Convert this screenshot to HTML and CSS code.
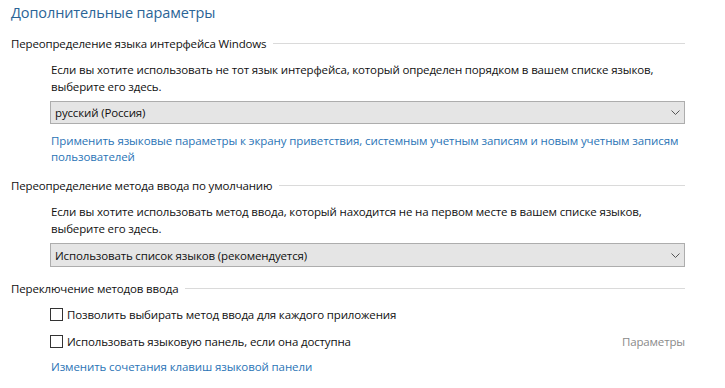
FILE: index.html
```html
<!DOCTYPE html>
<html lang="ru">
<head>
<meta charset="utf-8">
<link rel="stylesheet" href="styles.css">
</head>
<body>
<div class="page">
  <h1 class="title">Дополнительные параметры</h1>

  <div class="section-head"><span>Переопределение языка интерфейса Windows</span><i class="rule"></i></div>
  <div class="indent">
    <p class="para">Если вы хотите использовать не тот язык интерфейса, который определен порядком в вашем списке языков, выберите его здесь.</p>
    <div class="select select-1"><span>русский (Россия)</span><svg class="chev" width="9" height="5" viewBox="0 0 9 5"><path d="M0.5 0.5 L4.5 4.5 L8.5 0.5" fill="none" stroke="#555" stroke-width="1"/></svg></div>
    <a class="link link-1">Применить языковые параметры к экрану приветствия, системным учетным записям и новым учетным записям пользователей</a>
  </div>

  <div class="section-head sh-2"><span>Переопределение метода ввода по умолчанию</span><i class="rule"></i></div>
  <div class="indent">
    <p class="para para-2">Если вы хотите использовать метод ввода, который находится не на первом месте в вашем списке языков, выберите его здесь.</p>
    <div class="select select-2"><span>Использовать список языков (рекомендуется)</span><svg class="chev" width="9" height="5" viewBox="0 0 9 5"><path d="M0.5 0.5 L4.5 4.5 L8.5 0.5" fill="none" stroke="#555" stroke-width="1"/></svg></div>
  </div>

  <div class="section-head sh-3"><span>Переключение методов ввода</span><i class="rule"></i></div>
  <div class="indent">
    <div class="check-row cr-1"><span class="box"></span><span>Позволить выбирать метод ввода для каждого приложения</span></div>
    <div class="check-row cr-2"><span class="box"></span><span>Использовать языковую панель, если она доступна</span><span class="muted">Параметры</span></div>
    <a class="link link-2">Изменить сочетания клавиш языковой панели</a>
  </div>
</div>
</body>
</html>
```

FILE: styles.css
```css
html, body {
  margin: 0;
  padding: 0;
  background: #ffffff;
}
.page {
  width: 725px;
  box-sizing: border-box;
  padding: 3px 40px 0 11px;
  font-family: "Open Sans", "Noto Sans", sans-serif;
  font-size: 11.5px;
  letter-spacing: -0.15px;
  color: #111;
}
.title {
  margin: 0;
  font-size: 14.5px;
  font-weight: normal;
  letter-spacing: -0.1px;
  line-height: 20px;
  color: #2b6496;
}
.section-head {
  display: flex;
  align-items: center;
  gap: 7px;
  margin-top: 13px;
  line-height: 16px;
  height: 16px;
  white-space: nowrap;
}
.section-head .rule {
  flex: 1;
  height: 0;
  border-top: 1px solid #dadada;
  margin-top: -1px;
}
.sh-2 { margin-top: 13px; }
.sh-3 { margin-top: 14px; }
.indent {
  padding-left: 40px;
}
.para {
  margin: 9px 0 0 0;
  line-height: 17px;
}
.select {
  display: flex;
  align-items: center;
  justify-content: space-between;
  height: 23px;
  box-sizing: border-box;
  margin-top: 6px;
  margin-left: -1px;
  padding: 0 4px 0 4px;
  background: #e5e5e5;
  border: 1px solid #adadad;
  color: #111;
}
.select-2 { height: 24px; }
.link {
  display: block;
  margin-top: 9px;
  line-height: 16px;
  letter-spacing: -0.1px;
  color: #2a74b6;
}
.check-row {
  display: flex;
  align-items: center;
  height: 20px;
  margin-top: 7px;
  margin-left: -1px;
}
.box {
  width: 13px;
  height: 13px;
  box-sizing: border-box;
  border: 1px solid #333;
  background: #fff;
  margin-right: 4px;
  flex: none;
}
.muted {
  margin-left: auto;
  color: #8a8a8a;
}
.link-2 { margin-top: 8px; }
```
